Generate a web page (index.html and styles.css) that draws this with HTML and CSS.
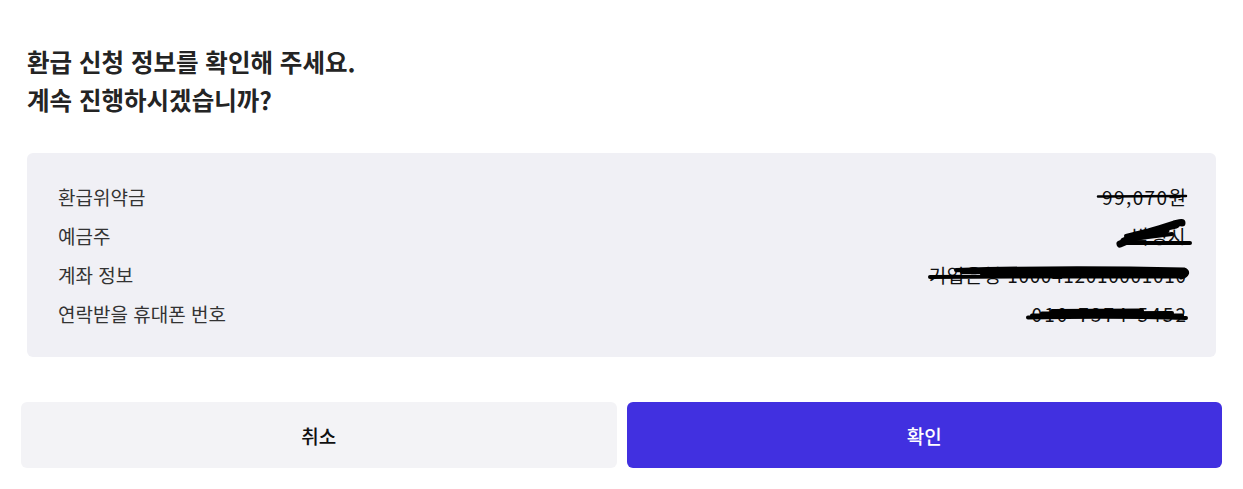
FILE: index.html
```html
<!DOCTYPE html>
<html lang="ko">
<head>
<meta charset="utf-8">
<title>환급 신청 확인</title>
<link rel="stylesheet" href="styles.css">
</head>
<body>
<div class="dialog">
  <h1 class="title">환급 신청 정보를 확인해 주세요.<br>계속 진행하시겠습니까?</h1>
  <div class="info">
    <div class="row">
      <span class="label">환급위약금</span>
      <span class="value"><span class="v v1">99,070원</span><svg class="scribble s1" width="100" height="39" viewBox="0 0 100 39"><path class="thin" d="M6 19.5 L94 19" /></svg></span>
    </div>
    <div class="row">
      <span class="label">예금주</span>
      <span class="value"><span class="v v2">박영시</span><svg class="scribble s2" width="80" height="39" viewBox="0 0 80 39"><path class="thick" d="M8 28 C22 22 42 14 62 8 C66 7 70 6 70 7 M12 25 C26 19 44 13 64 9 M16 23 L54 14" /><path d="M10 27 L78 27 M20 23 L60 18 M14 20 L34 15" /></svg></span>
    </div>
    <div class="row">
      <span class="label">계좌 정보</span>
      <span class="value"><span class="v v3">기업은행 1000412010001010</span><svg class="scribble s3" width="270" height="39" viewBox="0 0 270 39"><path d="M8 22 L92 21.5 M34 15 C100 13 200 13 262 14.5 C267 16 266 21 259 22.5 M60 19 L262 19 M86 17 L262 17 M40 17 L120 16.5 M90 21.5 L258 21.5" /></svg></span>
    </div>
    <div class="row">
      <span class="label">연락받을 휴대폰 번호</span>
      <span class="value"><span class="v v4">010-7374-5452</span><svg class="scribble s4" width="170" height="39" viewBox="0 0 170 39"><path d="M6 23.5 C50 22.5 120 22.5 164 24 M20 19.5 L150 19 M10 21.5 L160 21.5 M30 17 L120 16.5" /></svg></span>
    </div>
  </div>
  <div class="actions">
    <button class="btn btn-cancel" type="button">취소</button>
    <button class="btn btn-confirm" type="button">확인</button>
  </div>
</div>
</body>
</html>
```

FILE: styles.css
```css
* { box-sizing: border-box; }
html, body { margin: 0; padding: 0; background: #fff; }
body {
  font-family: "Noto Sans CJK KR", "Noto Sans", sans-serif;
  color: #222;
}
.dialog { padding: 0 21px; }
.title {
  margin: 43px 6px 0;
  font-size: 24.5px;
  line-height: 38px;
  font-weight: 700;
  letter-spacing: 0;
  color: #242424;
}
.info {
  margin: 34px 6px 0;
  background: #f0f0f5;
  border-radius: 6px;
  padding: 24px 30px 24px 31px;
  display: flex;
  flex-direction: column;
}
.row {
  display: flex;
  justify-content: space-between;
  align-items: center;
  height: 39px;
}
.label {
  font-size: 19px;
  color: #333;
  white-space: nowrap;
}
.value {
  position: relative;
  flex: none;
  display: block;
  white-space: nowrap;
  height: 39px;
  line-height: 39px;
  font-size: 19px;
  color: #111;
}
.v1 { letter-spacing: 1.4px; margin-right: -1.4px; }
.v2 { letter-spacing: 0.5px; }
.v3 { letter-spacing: 0.67px; margin-right: -0.67px; }
.v4 { letter-spacing: 2.1px; margin-right: -2.1px; }
.scribble {
  position: absolute;
  top: 0;
  right: -6px;
  overflow: visible;
}
.scribble path {
  fill: none;
  stroke: #000;
  stroke-width: 4;
  stroke-linecap: round;
  stroke-linejoin: round;
}
.scribble path.thin { stroke-width: 2.5; }
.scribble path.thick { stroke-width: 7; }
.actions {
  margin-top: 45px;
  display: grid;
  grid-template-columns: 1fr 1fr;
  gap: 10px;
}
.btn {
  height: 66px;
  border: 0;
  border-radius: 6px;
  font-family: inherit;
  font-size: 19px;
  font-weight: 500;
  cursor: pointer;
}
.btn-cancel { background: #f3f3f6; color: #111; }
.btn-confirm { background: #4130e0; color: #fff; }
```
